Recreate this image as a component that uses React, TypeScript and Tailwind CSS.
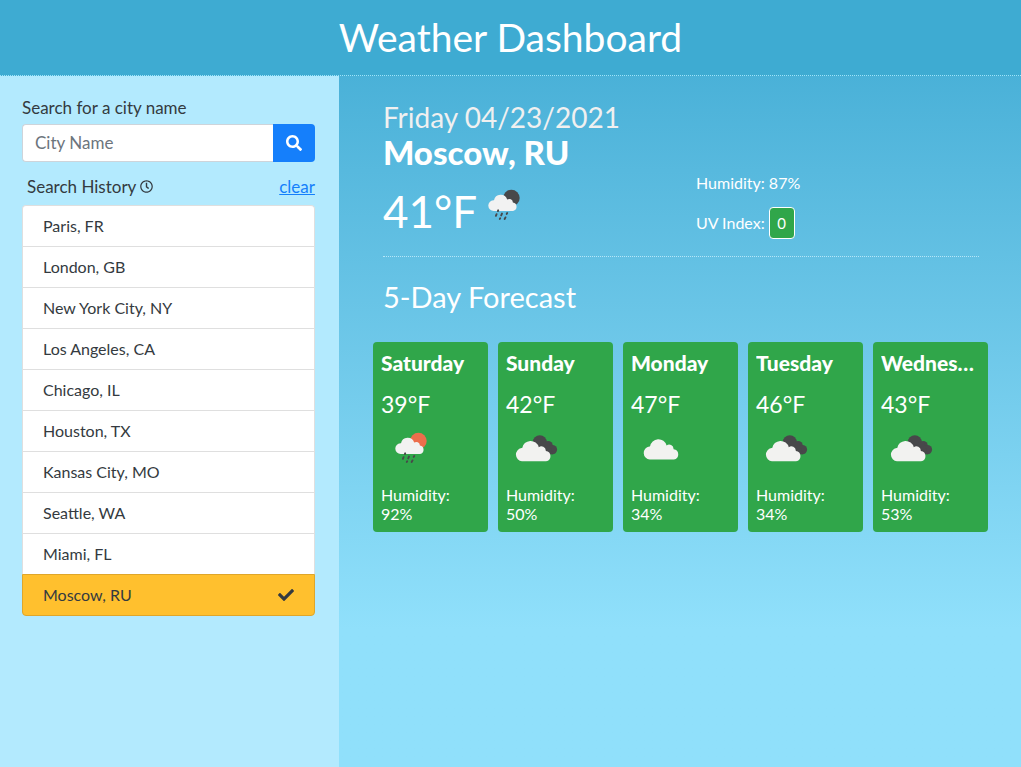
import React from "react";
import { FaCheck, FaRegClock, FaSearch } from "react-icons/fa";

type IconKind = "rain-day" | "rain-night" | "broken" | "cloudy";

interface ForecastDay {
  day: string;
  temp: number;
  icon: IconKind;
  humidity: number;
}

const cities: string[] = [
  "Paris, FR",
  "London, GB",
  "New York City, NY",
  "Los Angeles, CA",
  "Chicago, IL",
  "Houston, TX",
  "Kansas City, MO",
  "Seattle, WA",
  "Miami, FL",
  "Moscow, RU",
];

const activeCity = "Moscow, RU";

const forecast: ForecastDay[] = [
  { day: "Saturday", temp: 39, icon: "rain-day", humidity: 92 },
  { day: "Sunday", temp: 42, icon: "broken", humidity: 50 },
  { day: "Monday", temp: 47, icon: "cloudy", humidity: 34 },
  { day: "Tuesday", temp: 46, icon: "broken", humidity: 34 },
  { day: "Wednesday", temp: 43, icon: "broken", humidity: 53 },
];

function BigCloud() {
  return (
    <path
      fill="#f2f2f0"
      d="M12 36.2a6.6 6.6 0 0 1-.5-13.1h.7a8.5 8.5 0 0 1 16.6-.9 4.4 4.4 0 0 1 7 3.4v.3a5.2 5.2 0 0 1 .3 10.3z"
    />
  );
}

function WeatherIcon({ kind }: { kind: IconKind }) {
  if (kind === "cloudy") {
    return (
      <svg viewBox="0 0 50 50" className="h-[50px] w-[50px] shrink-0" aria-hidden="true">
        <g transform="translate(2.8 -1.7)">
          <BigCloud />
        </g>
      </svg>
    );
  }
  if (kind === "broken") {
    return (
      <svg viewBox="0 0 50 50" className="h-[50px] w-[50px] shrink-0" aria-hidden="true">
        <g fill="#48484a">
          <circle cx="29.8" cy="17.3" r="7" />
          <circle cx="38.2" cy="20.6" r="4.6" />
          <circle cx="42.4" cy="24.6" r="4.7" />
          <path d="M29 18h10l4 11.2H31z" />
        </g>
        <BigCloud />
      </svg>
    );
  }
  return (
    <svg viewBox="0 0 50 50" className="h-[50px] w-[50px] shrink-0" aria-hidden="true">
      <circle cx="33.4" cy="16" r="8.3" fill={kind === "rain-day" ? "#ec6e4c" : "#48484a"} />
      <path
        fill="#f2f2f2"
        d="M15.8 28.9a5.3 5.3 0 0 1-.4-10.6h.6a6.8 6.8 0 0 1 13.2-.7 3.6 3.6 0 0 1 5.7 2.8v.2a4.2 4.2 0 0 1 .2 8.3z"
      />
      <g stroke="#48484a" strokeWidth="1.9" strokeLinecap="round">
        <path d="M20.2 28.3l-.3.8M18.6 32.2l-.7 1.6M24 31.6l-.8 1.8M29.2 31l-.5.9M22.2 36.2l-.4.7M27.5 35.4l-.9 1.6" />
      </g>
    </svg>
  );
}

function Sidebar() {
  return (
    <aside className="w-[33.2%] shrink-0 bg-[#b3eafe] pt-5 pr-6 pb-6 pl-[22px]">
      <form onSubmit={(e) => e.preventDefault()}>
        <label htmlFor="city" className="mb-1 block text-[17px] leading-6">
          Search for a city name
        </label>
        <div className="flex h-[38px]">
          <input
            id="city"
            type="text"
            placeholder="City Name"
            className="min-w-0 flex-1 rounded-l border border-r-0 border-[#ced4da] bg-white px-3 text-[17px] outline-none placeholder:text-[#6c757d]"
          />
          <button
            type="submit"
            aria-label="Search"
            className="flex w-[42px] items-center justify-center rounded-r bg-[#157ffb] text-white"
          >
            <FaSearch size={16} />
          </button>
        </div>
      </form>
      <div className="mt-3 mb-1.5 flex items-center justify-between pl-[5px] text-[17px] leading-[25px]">
        <h2 className="flex items-center gap-1">
          Search History <FaRegClock size={13} />
        </h2>
        <button type="button" className="text-[#157ffb] underline">
          clear
        </button>
      </div>
      <ul>
        {cities.map((city) => (
          <li key={city} className="group">
            <button
              type="button"
              className={
                city === activeCity
                  ? "flex h-[42px] w-full items-center justify-between rounded-b border border-[#dfa62a] bg-[#ffc02e] px-5 text-left text-base"
                  : "flex h-[41px] w-full items-center border-x border-t border-[#dfdfdf] bg-white px-5 text-left text-base group-first:rounded-t"
              }
            >
              {city}
              {city === activeCity && <FaCheck size={16} />}
            </button>
          </li>
        ))}
      </ul>
    </aside>
  );
}

function CurrentWeather() {
  return (
    <section className="grid grid-cols-2 gap-[30px] border-b border-dotted border-[#b5e6f8] pb-[15px]">
      <div>
        <p className="text-[28px] leading-[33px] whitespace-nowrap text-[#f0f0f0]">Friday 04/23/2021</p>
        <h2 className="text-[33px] leading-9 font-black whitespace-nowrap">Moscow, RU</h2>
        <div className="mt-3 flex h-[59px] gap-[9px]">
          <span className="w-[86px] text-[44px] leading-[58px] whitespace-nowrap">41°F</span>
          <WeatherIcon kind="rain-night" />
        </div>
      </div>
      <div className="pt-[70px] text-base">
        <p className="leading-6">Humidity: 87%</p>
        <p className="mt-3 flex items-center gap-1">
          UV Index:
          <span className="flex h-8 w-[26px] items-center justify-center rounded border border-white bg-[#30a64a] text-[15px]">
            0
          </span>
        </p>
      </div>
    </section>
  );
}

function ForecastCard({ day, temp, icon, humidity }: ForecastDay) {
  return (
    <li className="min-w-0 rounded bg-[#30a64a] p-2">
      <h3 className="truncate text-[21px] leading-[26px] font-black">{day}</h3>
      <p className="mt-3.5 text-[23px] leading-[29px]">{temp}°F</p>
      <div className="mt-1.5 mb-2.5 pl-1">
        <WeatherIcon kind={icon} />
      </div>
      <p className="pb-px text-base leading-[19px]">
        Humidity:
        <br />
        {humidity}%
      </p>
    </li>
  );
}

export default function App() {
  return (
    <div className="flex min-h-screen flex-col bg-[#90e0fb] font-['Lato',sans-serif] text-[#343a40]">
      <header className="border-b border-dotted border-[#a0e4fa] bg-[#3eabd2] pt-3 pb-[13px] text-center text-white">
        <h1 className="text-[39px] leading-[50px]">Weather Dashboard</h1>
      </header>
      <div className="flex flex-1">
        <Sidebar />
        <main className="min-w-0 flex-1 bg-linear-to-b from-[#4ab1d8] to-[#90e0fb] to-80% pt-[25px] pr-[42px] pb-6 pl-11 text-white">
          <CurrentWeather />
          <section>
            <h2 className="mt-[23px] mb-[29px] text-[29px] leading-[33px]">5-Day Forecast</h2>
            <ul className="-mr-[9px] -ml-[10px] grid grid-cols-5 gap-[10px]">
              {forecast.map((item) => (
                <ForecastCard key={item.day} {...item} />
              ))}
            </ul>
          </section>
        </main>
      </div>
    </div>
  );
}
